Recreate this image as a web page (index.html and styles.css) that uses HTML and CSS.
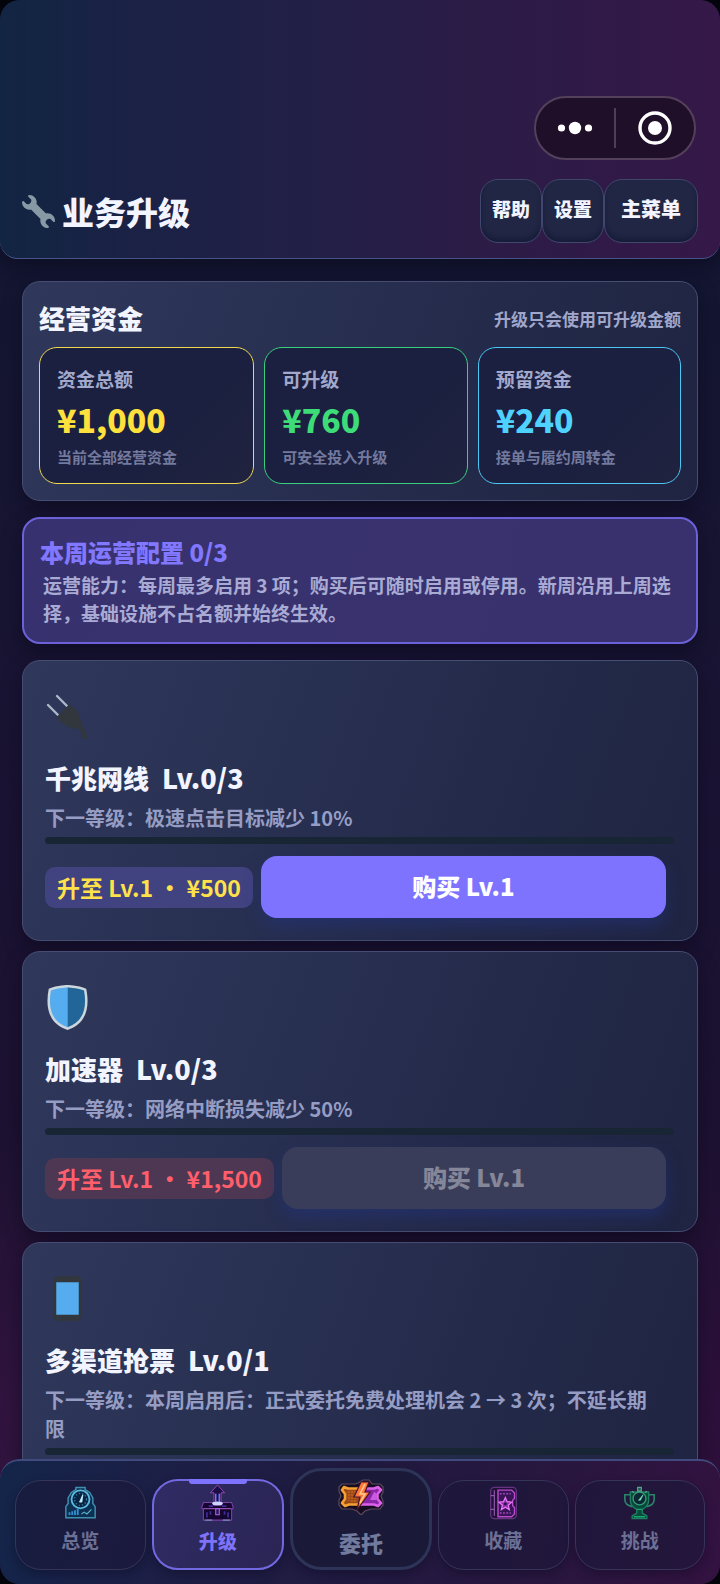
FILE: index.html
```html
<!DOCTYPE html>
<html lang="zh-CN">
<head>
<meta charset="utf-8">
<meta name="viewport" content="width=device-width, initial-scale=1">
<title>业务升级</title>
<link rel="stylesheet" href="styles.css">
</head>
<body>
<div class="app">
  <header class="topbar">
    <div class="capsule">
      <button class="capsule-btn" type="button" aria-label="更多">
        <svg width="36" height="36" viewBox="0 0 36 36" fill="#fff"><circle cx="4.500" cy="18" r="3.600"/><circle cx="18" cy="18" r="6.200"/><circle cx="31.500" cy="18" r="3.600"/></svg>
      </button>
      <span class="capsule-line"></span>
      <button class="capsule-btn" type="button" aria-label="关闭">
        <svg width="36" height="36" viewBox="0 0 36 36"><circle cx="18" cy="18" r="15" fill="none" stroke="#fff" stroke-width="3.400"/><circle cx="18" cy="18" r="7" fill="#fff"/></svg>
      </button>
    </div>
    <div class="topbar-row">
      <h1 class="page-title">
        <svg class="title-icon" viewBox="0 0 36 36" fill="#8899a6"><path d="M27.989 19.977c-.622 0-1.225.078-1.806.213L15.811 9.818c.134-.581.212-1.184.212-1.806C16.023 3.587 12.436 0 8.012 0 7.11 0 5.91.916 6.909 1.915l2.997 2.997s.999 1.998-.999 3.995-3.996.998-3.996.998L1.915 6.909C.916 5.91 0 7.105 0 8.012c0 4.425 3.587 8.012 8.012 8.012.622 0 1.225-.078 1.806-.212l10.371 10.371c-.135.581-.213 1.184-.213 1.806 0 4.425 3.588 8.011 8.012 8.011.901 0 2.101-.916 1.102-1.915l-2.997-2.997s-.999-1.998.999-3.995 3.995-.999 3.995-.999l2.997 2.997c1 .999 1.916-.196 1.916-1.102 0-4.425-3.587-8.012-8.011-8.012z"/></svg>
        业务升级
      </h1>
      <div class="actions">
        <button class="action" type="button">帮助</button>
        <button class="action" type="button">设置</button>
        <button class="action action-wide" type="button">主菜单</button>
      </div>
    </div>
  </header>

  <main class="content">
    <section class="card funds">
      <div class="funds-head">
        <h2 class="card-title">经营资金</h2>
        <span class="funds-note">升级只会使用可升级金额</span>
      </div>
      <div class="stats">
        <div class="stat stat-gold">
          <span class="stat-label">资金总额</span>
          <strong class="stat-value">¥1,000</strong>
          <span class="stat-sub">当前全部经营资金</span>
        </div>
        <div class="stat stat-green">
          <span class="stat-label">可升级</span>
          <strong class="stat-value">¥760</strong>
          <span class="stat-sub">可安全投入升级</span>
        </div>
        <div class="stat stat-blue">
          <span class="stat-label">预留资金</span>
          <strong class="stat-value">¥240</strong>
          <span class="stat-sub">接单与履约周转金</span>
        </div>
      </div>
    </section>

    <section class="card notice">
      <h2 class="notice-title">本周运营配置 0/3</h2>
      <p class="notice-text">运营能力：每周最多启用 3 项；购买后可随时启用或停用。新周沿用上周选择，基础设施不占名额并始终生效。</p>
    </section>

    <div class="upgrades">
      <article class="card upgrade">
        <svg class="upgrade-icon" viewBox="0 0 45 45">
          <path d="M3 11 13 21M12 2 22 12" fill="none" stroke="#aab8c8" stroke-width="2.400" stroke-linecap="round"/>
          <path d="M11.500 23 24 10.500c5 2 10 8 12 16.500l.500 5c3 2.500 5 6 5.500 11.500-.500 2-4 2-4.500 0-.300-4-1.500-6.500-4-8.500-8-.500-17.500-4.500-22-12z" fill="#31373d"/>
        </svg>
        <h3 class="upgrade-title"><span>千兆网线</span><span>Lv.0/3</span></h3>
        <p class="upgrade-desc">下一等级：极速点击目标减少 10%</p>
        <progress class="bar" max="3" value="0" aria-label="千兆网线等级"></progress>
        <div class="buy-row">
          <span class="price">升至 Lv.1 · ¥500</span>
          <button class="buy" type="button">购买 Lv.1</button>
        </div>
      </article>

      <article class="card upgrade">
        <svg class="upgrade-icon" viewBox="0 0 36 36">
          <path d="M33 3c-7-3-15-3-15-3S10 0 3 3C0 18 3 31 18 36c15-5 18-18 15-33z" fill="#ccd6dd"/>
          <path d="M18 33.884C6.412 29.729 1.961 19.831 4.760 4.444 11.063 2.029 17.928 2 18 2z" fill="#55acee"/>
          <path d="M18 33.884C29.588 29.729 34.039 19.831 31.240 4.444 24.937 2.029 18.072 2 18 2z" fill="#269"/>
        </svg>
        <h3 class="upgrade-title"><span>加速器</span><span>Lv.0/3</span></h3>
        <p class="upgrade-desc">下一等级：网络中断损失减少 50%</p>
        <progress class="bar" max="3" value="0" aria-label="加速器等级"></progress>
        <div class="buy-row">
          <span class="price price-short">升至 Lv.1 · ¥1,500</span>
          <button class="buy" type="button" disabled>购买 Lv.1</button>
        </div>
      </article>

      <article class="card upgrade">
        <svg class="upgrade-icon" viewBox="0 0 36 36">
          <path d="M11 36s-4 0-4-4V4s0-4 4-4h14s4 0 4 4v28s0 4-4 4H11z" fill="#31373d"/>
          <path d="M9 5h18v26H9z" fill="#55acee"/>
        </svg>
        <h3 class="upgrade-title"><span>多渠道抢票</span><span>Lv.0/1</span></h3>
        <p class="upgrade-desc">下一等级：本周启用后：正式委托免费处理机会 2 → 3 次；不延长期限</p>
        <progress class="bar" max="1" value="0" aria-label="多渠道抢票等级"></progress>
      </article>
    </div>
  </main>

  <nav class="tabs">
    <button class="tab" type="button">
      <svg class="tab-icon" viewBox="0 0 36 36" fill="none">
        <path d="M13 3.500V1h10v2.500l5 3 3.500 6v6L34 22v12H2V22l2.500-3.500v-6l3.500-6z" fill="#0c2f52" stroke="#3f8fae" stroke-width="1.600"/>
        <circle cx="18" cy="14" r="9.800" fill="#0b2340" stroke="#5cbbe0" stroke-width="2"/>
        <circle cx="18" cy="14" r="6.500" stroke="#2b7ca6" stroke-width="1.400" stroke-dasharray="1.500 2"/>
        <path d="M17 17l3.500-8-1 8z" fill="#bdefff" stroke="#bdefff" stroke-width="1"/>
        <path d="M6 31v-3M9 31v-4M12 31v-5M15 31v-7" stroke="#2f8fd0" stroke-width="2"/>
        <path d="M19 30l3-2 3 2 5-5" stroke="#5cb4cc" stroke-width="1.200"/>
      </svg>
      总览
    </button>
    <button class="tab tab-active" type="button" aria-current="page">
      <svg class="tab-icon tab-icon-up" viewBox="0 0 36 42" fill="none">
        <path d="M18 1l8 9h-4v12h-8V10h-4z" fill="#1c0f48" stroke="#a04fb8" stroke-width="1"/>
        <path d="M16 11v11M20 11v11" stroke="#6a7cff" stroke-width="1.600"/>
        <path d="M2 21h10l2 3h8l2-3h10l2 6-2 2v12H2V29l-2-2z" fill="#14062f" stroke="#7a3fa8" stroke-width="1.200"/>
        <ellipse cx="18" cy="22" rx="6" ry="2.200" fill="#cfd4ff"/>
        <path d="M2 28h32" stroke="#a658c8" stroke-width="1.200"/>
        <path d="M6 32v6M10 31v4M26 31v4M30 32v6M8 25h5M23 25h5" stroke="#3f2a98" stroke-width="2"/>
        <path d="M16 28h4v7h-4z" fill="#2a1460" stroke="#b06ae0" stroke-width="1.200"/>
        <path d="M4 41h8M24 41h8" stroke="#7590b8" stroke-width="1.200"/>
      </svg>
      升级
    </button>
    <button class="tab tab-main" type="button">
      <svg class="tab-icon tab-icon-main" viewBox="0 0 46 36" fill="none">
        <path d="M4 5h13l3-1 5-3h6l3 4h8l3 3v5l-2 4 2 5v4l-3 4h-9l-6 2-4 4-4-4-5-2H4l-3-4v-5l2-4-2-5V8z" fill="#160d22" stroke="#5b4a5e" stroke-width="1.200"/>
        <path d="M6 8l4 1.500h13v16H11L7 27l-3-3 3-4v-5l-3-4z" fill="#9c4a18" stroke="#f5a033" stroke-width="2.600" stroke-linejoin="round"/>
        <path d="M24 9.500h12L40 8l3 3-3.500 4v5l3.500 4-3 3-4-1.500H22z" fill="#8a27a8" stroke="#db62e8" stroke-width="2.600" stroke-linejoin="round"/>
        <path d="M11 12v10M14 12v12M17 12v12" stroke="#c8641c" stroke-width="1.400" stroke-dasharray="2 1"/>
        <path d="M36 13l-4 8h6v-7z" fill="#c95ae0"/>
        <path d="M23 3h8l-4 10h5L19 31l3-13h-6z" fill="#ff7a3a" stroke="#4a1230" stroke-width="1.200"/>
        <path d="M27 5l-5 10h5l-5 9" stroke="#ffc98a" stroke-width="1.600"/>
      </svg>
      委托
    </button>
    <button class="tab" type="button">
      <svg class="tab-icon" viewBox="0 0 36 36" fill="none">
        <rect x="4" y="1" width="28" height="34" rx="4" fill="#22103a" stroke="#64347e" stroke-width="1.400"/>
        <path d="M12 4h15l3 3v6l-2 2v6l2 2v7l-3 3H12z" fill="#3a1458" stroke="#b84ccc" stroke-width="1.500"/>
        <path d="M14 8h12M14 29h12" stroke="#9a48b4" stroke-width="1.600" stroke-dasharray="2 1.500"/>
        <path d="M20 12l2 4.500 5 .500-3.800 3.400 1.200 5-4.400-2.700-4.400 2.700 1.200-5-3.800-3.400 5-.500z" fill="#8c2fb0" stroke="#ec7cf5" stroke-width="1.300"/>
        <circle cx="20" cy="19" r="1.600" fill="#2a1048"/>
        <path d="M4 10h4M4 25h4M8 4v28" stroke="#8a5aa8" stroke-width="1.300"/>
      </svg>
      收藏
    </button>
    <button class="tab" type="button">
      <svg class="tab-icon" viewBox="0 0 36 36" fill="none">
        <path d="M8 9H2v5c0 4 3 7 8 8M28 9h6v5c0 4-3 7-8 8" stroke="#2a8468" stroke-width="1.800"/>
        <path d="M8 6h20v9c0 5-3 8-7 10v4l5 3v3H10v-3l5-3v-4c-4-2-7-5-7-10z" fill="#064a3c" stroke="#1f8060" stroke-width="1.500"/>
        <circle cx="18" cy="13" r="7" fill="#0c2832" stroke="#3a9878" stroke-width="1.500"/>
        <path d="M16 1h4v4h-4zM10 5l2 2M26 5l-2 2" fill="#1d5c50" stroke="#58a48c" stroke-width="1.300"/>
        <path d="M17 15l5-6-3 6z" fill="#7ff0c8" stroke="#7ff0c8" stroke-width="0.600"/>
        <path d="M15 25h6M12 33h12" stroke="#17a870" stroke-width="1.500"/>
      </svg>
      挑战
    </button>
  </nav>
</div>
</body>
</html>
```
FILE: styles.css
```css
* {
  box-sizing: border-box;
}

body {
  margin: 0;
  background: #04050c;
  font-family: "Noto Sans CJK SC", "Noto Sans", sans-serif;
  font-weight: 700;
  color: #f2f4ff;
}

button {
  margin: 0;
  padding: 0;
  border: 0;
  background: none;
  color: inherit;
  font: inherit;
  cursor: pointer;
}

h1, h2, h3, p {
  margin: 0;
}

h1, h2, h3, strong {
  font-weight: 900;
}

svg {
  display: block;
  flex: none;
}

.app {
  display: flex;
  flex-direction: column;
  height: 100vh;
  border-radius: 20px;
  overflow: hidden;
  background:
    radial-gradient(ellipse 120px 300px at 0 90%, rgba(80, 25, 90, 0.4), transparent),
    radial-gradient(ellipse 120px 300px at 100% 90%, rgba(70, 15, 80, 0.4), transparent),
    linear-gradient(180deg, #13183a 0%, #141631 20%, #1a1333 50%, #20102e 100%);
}

.topbar {
  display: flex;
  flex-direction: column;
  gap: 19px;
  padding: 96px 22px 15px;
  border-bottom: 1px solid #47548c;
  border-radius: 0 0 18px 18px;
  background: linear-gradient(90deg, #122542 0%, #1c2146 22%, #231f46 45%, #2b1c46 65%, #351848 100%);
  box-shadow: 0 6px 20px rgba(8, 8, 24, 0.6);
}

.capsule {
  display: flex;
  align-items: center;
  align-self: flex-end;
  width: 162px;
  height: 64px;
  margin-right: 2px;
  border: 2px solid #55405c;
  border-radius: 32px;
  background: #1f0f29;
}

.capsule-btn {
  display: flex;
  flex: 1;
  justify-content: center;
}

.capsule-line {
  width: 2px;
  height: 40px;
  background: #4e3f57;
}

.topbar-row {
  display: flex;
  align-items: center;
  justify-content: space-between;
}

.page-title {
  display: flex;
  align-items: center;
  gap: 7px;
  font-size: 32px;
  line-height: 44px;
}

.title-icon {
  width: 33px;
  height: 33px;
}

.actions {
  display: flex;
}

.action {
  height: 64px;
  padding: 0 11px 6px;
  border: 1px solid #41466c;
  border-radius: 18px;
  background: #202644;
  box-shadow: inset 0 -4px 4px rgba(10, 14, 40, 0.4);
  font-size: 19px;
  font-weight: 900;
}

.action-wide {
  padding: 0 16px 6px;
  font-size: 20px;
}

.content {
  display: flex;
  flex: 1;
  flex-direction: column;
  gap: 16px;
  min-height: 0;
  padding: 22px 22px 0;
  overflow: hidden;
}

.card {
  flex: none;
  border: 1px solid #464d72;
  border-radius: 18px;
  background: linear-gradient(110deg, #2f385b 0%, #293153 35%, #232948 70%, #1f2442 100%);
  box-shadow: 0 8px 18px rgba(10, 8, 26, 0.5);
}

.funds {
  padding: 18px 16px 16px;
}

.funds-head {
  display: flex;
  align-items: center;
  justify-content: space-between;
  margin-bottom: 11px;
}

.card-title {
  font-size: 26px;
  line-height: 36px;
}

.funds-note {
  color: #a0a7cb;
  font-size: 17px;
}

.stats {
  display: grid;
  grid-template-columns: 18fr 17fr 17fr;
  gap: 10px;
}

.stat {
  display: flex;
  flex-direction: column;
  padding: 17px 17px 15px;
  border: 1px solid;
  border-radius: 18px;
  background: linear-gradient(135deg, #1c2040, #1b2040 60%, #20233f);
}

.stat-gold {
  border-color: #f0d84f;
  color: #ffe03d;
}

.stat-green {
  border-color: #38d07e;
  color: #3ddc78;
}

.stat-blue {
  border-color: #4cc6f4;
  color: #4fd2ff;
}

.stat-label {
  color: #a3a9cc;
  font-size: 19px;
  line-height: 28px;
}

.stat-value {
  font-size: 32px;
  line-height: 53px;
}

.stat-sub {
  color: #737a9e;
  font-size: 15px;
  line-height: 22px;
}

.notice {
  padding: 16px 16px 15px;
  border: 2px solid #6c61d8;
  background: linear-gradient(110deg, #37326f, #39316d);
}

.notice-title {
  margin-bottom: 2px;
  color: #8278ff;
  font-size: 24px;
  line-height: 34px;
}

.notice-text {
  padding-left: 3px;
  color: #a9abd4;
  font-size: 19px;
  line-height: 28px;
}

.upgrades {
  display: flex;
  flex-direction: column;
  gap: 10px;
}

.upgrade {
  padding: 33px 23px 22px 22px;
}

.upgrade-icon {
  width: 45px;
  height: 45px;
}

.upgrade-title {
  display: flex;
  gap: 13px;
  margin-top: 20px;
  font-size: 26px;
  line-height: 38px;
}

.upgrade-title span + span {
  font-size: 27px;
}

.upgrade-desc {
  margin-top: 6px;
  padding-right: 8px;
  color: #969dc4;
  font-size: 20px;
  line-height: 29px;
}

.bar {
  display: block;
  width: 100%;
  height: 7px;
  margin-top: 5px;
  border: 0;
  border-radius: 4px;
  overflow: hidden;
  appearance: none;
  background: #182535;
}

.bar::-webkit-progress-bar {
  background: #182535;
}

.bar::-webkit-progress-value {
  background: #3ddc78;
}

.buy-row {
  display: flex;
  align-items: center;
  gap: 8px;
  margin-top: 12px;
  padding-right: 8px;
}

.price {
  padding: 0 12px;
  border-radius: 10px;
  background: #414280;
  color: #ffe14a;
  font-size: 23px;
  line-height: 41px;
}

.price-short {
  background: #4d3753;
  color: #ff5e6b;
}

.buy {
  flex: 1;
  height: 62px;
  padding-bottom: 4px;
  border-radius: 16px;
  background: #7d73ff;
  box-shadow: 0 8px 16px rgba(35, 50, 120, 0.6);
  color: #fff;
  font-size: 24px;
  font-weight: 900;
}

.buy:disabled {
  background: #3a3d5a;
  color: #858799;
  cursor: default;
}

.tabs {
  display: flex;
  flex: none;
  align-items: flex-end;
  gap: 6px;
  padding: 7px 15px 14px;
  border-top: 2px solid #404a7c;
  border-radius: 20px 20px 0 0;
  background: linear-gradient(100deg, #14254a 0%, #1c1f46 22%, #211a40 50%, #2a163f 80%, #331240 100%);
}

.tab {
  display: flex;
  flex: 1;
  flex-direction: column;
  align-items: center;
  height: 90px;
  padding-top: 5px;
  border: 1px solid #363459;
  border-radius: 26px;
  background: rgba(26, 24, 56, 0.6);
  box-shadow: 0 4px 10px rgba(10, 8, 30, 0.35);
  color: #6c7095;
  font-size: 19px;
  line-height: 28px;
  gap: 6px;
}

.tab-icon {
  width: 33px;
  height: 34px;
}

.tab-active {
  position: relative;
  height: 91px;
  padding-top: 3px;
  border: 2px solid #7268e0;
  background: linear-gradient(110deg, #302b63, #2a2554);
  color: #7d73f8;
  font-weight: 900;
}

.tab-active::before {
  content: "";
  position: absolute;
  top: -2px;
  left: calc(50% - 29px);
  width: 58px;
  height: 5px;
  border-radius: 0 0 3px 3px;
  background: #7d73ff;
}

.tab-icon-up {
  height: 37px;
}

.tab-main {
  flex: 0 1 142px;
  height: 102px;
  padding-top: 8px;
  border: 3px solid #2e3358;
  border-radius: 32px;
  background: #1a1a38;
  color: #727a9e;
  font-size: 22px;
  font-weight: 900;
  line-height: 32px;
  gap: 11px;
}

.tab-icon-main {
  width: 46px;
  height: 36px;
}
```
